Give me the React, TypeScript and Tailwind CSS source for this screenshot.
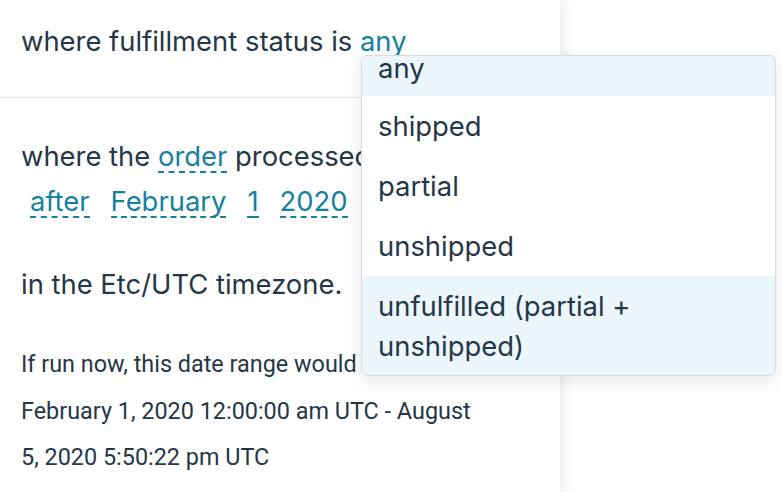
import React from "react";

const Link = ({ children, className = "" }: { children: React.ReactNode; className?: string }) => (
  <span className={`inline-block leading-[29px] text-[#17809f] border-b-2 border-dashed border-[#17809f] ${className}`}>{children}</span>
);

export default function App() {
  const items = ["shipped", "partial", "unshipped"];
  return (
    <div className="relative w-[782px] h-[492px] bg-white overflow-hidden text-[#253746]" style={{ fontFamily: "Inter, 'Noto Sans', sans-serif" }}>
      <div className="flex h-full">
        <div className="w-[560px] h-full bg-white shadow-[3px_0_14px_rgba(0,0,0,0.09)] relative z-10">
          <div className="h-[98px] flex items-center px-[21px] border-b border-[#e3e8ec]">
            <p className="text-[27.4px] leading-[30px] -mt-[16px]">
              where fulfillment status is <span className="text-[#17809f]">any</span>
            </p>
          </div>
          <div className="px-[21px] pt-[36px]">
            <p className="text-[27.4px] leading-[44px]">
              where the <Link>order</Link> processed
            </p>
            <p className="text-[27.4px] h-[44px] mt-[2px] flex items-center gap-[21px] pl-[9px]">
              <Link>after</Link>
              <Link>February</Link>
              <Link>1</Link>
              <Link>2020</Link>
            </p>
            <p className="text-[27.4px] leading-[30px] mt-[45px]">in the Etc/UTC timezone.</p>
            <div className="text-[23.4px] leading-[46.5px]" style={{ fontFamily: "Roboto, 'Noto Sans', sans-serif" }}>
              <p className="mt-[42px]">If run now, this date range would be</p>
              <p>February 1, 2020 12:00:00 am UTC - August</p>
              <p>5, 2020 5:50:22 pm UTC</p>
            </div>
          </div>
        </div>
        <div className="flex-1 bg-white" />
      </div>

      <div className="absolute left-[361px] top-[55px] w-[415px] h-[321px] z-20 bg-white border border-[#d9dcdf] rounded-[6px] shadow-[0_4px_16px_rgba(0,0,0,0.10)] overflow-hidden">
        <div className="text-[27.4px] leading-[40px]">
          <div className="bg-[#ecf6fd] px-[16px] pt-0 pb-[16px] leading-[24px]">any</div>
          {items.map((t) => (
            <div key={t} className="px-[16px] py-[10px]">{t}</div>
          ))}
          <div className="bg-[#ecf6fd] px-[16px] py-[10px] pr-[60px]">unfulfilled (partial + unshipped)</div>
        </div>
      </div>
    </div>
  );
}
